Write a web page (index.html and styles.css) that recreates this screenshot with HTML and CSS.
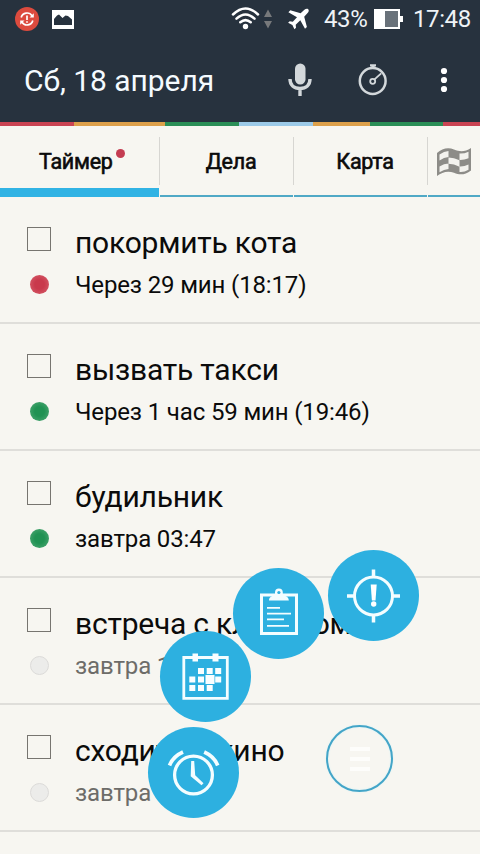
FILE: index.html
```html
<!DOCTYPE html>
<html lang="ru">
<head>
<meta charset="utf-8">
<title>Таймер</title>
<link rel="stylesheet" href="styles.css">
</head>
<body>
<div class="app">
  <header class="header">
    <div class="status">
      <svg class="status-left" width="80" height="38" viewBox="0 0 80 38">
        <circle cx="27" cy="19" r="12" fill="#dc4b3e"/>
        <g fill="none" stroke="#fff" stroke-width="1.7"><path d="M21.2 17.5a6 6 0 0 1 10.8-1.8M32.8 20.500a6 6 0 0 1-10.800 1.800M27 15.500v4.500M27 21.300v1.500"/></g>
        <path d="M33.800 13.200v4.300h-4.300zM20.200 24.800v-4.300h4.300z" fill="#fff"/>
        <path d="M52 10h22v19H52z" fill="#fff"/>
        <path d="M54 25v-6l3-3.500 2-1 3.500 3.500 3-2.500 2.500.5 4 3.500V25z" fill="#27323e"/>
      </svg>
      <div class="status-right">
        <svg class="status-net" width="84" height="38" viewBox="230 0 84 38">
          <g fill="none" stroke="#fff" stroke-width="2.500" stroke-linecap="round"><path d="M233 14.500q12.500-12 25 0M236.500 18.700q9-8.500 18 0M240.300 22.300q5.200-4.400 10.400 0"/></g>
          <circle cx="245.500" cy="26.500" r="2.700" fill="#fff"/>
          <path d="M264 17l4-7.500 4 7.500zM264 21h8l-4 7.500z" fill="#77797b"/>
          <path fill="#fff" d="M308.200 9.200c1 .9.500 2.500-.4 3.600l-3.600 3.900 2.700 10.300-1.900 1.800-4.700-8.500-4.600 4.400.3 3-1.600 1.500-2-4.200-4.300-2.200 1.600-1.600 3.100.5 4.200-4.500-8.600-4.900 1.900-2 10.300 3 3.800-3.500c1.200-1 2.800-1.500 3.800-.6z"/>
        </svg>
        <span class="percent">43%</span>
        <svg class="battery" width="30" height="38" viewBox="373 0 30 38"><path d="M374 9h26v7h3v6h-3v7h-26z" fill="#fff"/><path d="M385 11h13v16h-13z" fill="#69727a"/></svg>
        <span class="clock">17:48</span>
      </div>
    </div>
    <div class="toolbar">
      <h1 class="title">Сб, 18 апреля</h1>
      <svg class="tools" width="200" height="84" viewBox="280 38 200 84">
        <rect x="295" y="63.500" width="10.500" height="21" rx="5.250" fill="#d3d8db"/>
        <path d="M290 79c0 6 3.800 9.500 10 9.500S310 85 310 79M300 88.500v7.500" fill="none" stroke="#d3d8db" stroke-width="3.400"/>
        <g fill="none" stroke="#d3d8db"><circle cx="372.700" cy="81" r="12.900" stroke-width="2.500"/><circle cx="372.700" cy="81.300" r="2.500" stroke-width="1.800"/><path d="M374.500 79.300l6.700-6" stroke-width="1.800"/></g>
        <path d="M370 64.300h6v2.200h-1.300V69h-3.400v-2.500H370z" fill="#d3d8db"/>
        <g fill="#fff"><circle cx="444" cy="71" r="3.100"/><circle cx="444" cy="80" r="3.100"/><circle cx="444" cy="89" r="3.100"/></g>
      </svg>
    </div>
  </header>
  <div class="stripes"><i class="red"></i><i class="orange"></i><i class="green"></i><i class="blue"></i><i class="orange"></i><i class="green"></i><i class="red"></i></div>
  <nav class="tabs">
    <div class="tab active"><span class="label timer">Таймер</span><b class="badge"></b></div>
    <div class="tab"><span class="label todo">Дела</span></div>
    <div class="tab"><span class="label map">Карта</span></div>
    <div class="tab flag">
      <svg width="36" height="30" viewBox="0 0 36 30">
        <path d="M1 6C6 1.500 12 0 18 2.500S29 5 35 1v22.500c-6 4.500-11 4.800-17 2.300S6 25 1 29z" fill="#8d8c88"/>
        <path d="M3.500 7.500Q8 4.300 12.500 4v6Q8 10.300 3.500 13.500zM23.500 6.500q4.500.3 9-1.800v6.500q-4.500 2-9 1.800zM12.500 10.500q5.500 0 11 2.800v6.500q-5.500-2.800-11-3zM3.500 19.500q4.500-3 9-3V22q-4.500.2-9 3.200zM23.500 19.500q4.500.3 9-2v5.200q-4.500 2.800-9 2.300z" fill="#f3f2ee"/>
      </svg>
    </div>
  </nav>
  <main class="list">
    <article class="task"><div class="marks"><i class="box"></i><i class="dot high"></i></div><div class="text"><h2>покормить кота</h2><p>Через 29 мин (18:17)</p></div></article>
    <article class="task"><div class="marks"><i class="box"></i><i class="dot ok"></i></div><div class="text"><h2>вызвать такси</h2><p>Через 1 час 59 мин (19:46)</p></div></article>
    <article class="task"><div class="marks"><i class="box"></i><i class="dot ok"></i></div><div class="text"><h2>будильник</h2><p>завтра 03:47</p></div></article>
    <article class="task later"><div class="marks"><i class="box"></i><i class="dot"></i></div><div class="text"><h2>встреча с клиентом</h2><p>завтра 12:00</p></div></article>
    <article class="task later"><div class="marks"><i class="box"></i><i class="dot"></i></div><div class="text"><h2>сходить в кино</h2><p>завтра 19:00</p></div></article>
  </main>
  <div class="fab fab-target">
    <svg width="91" height="91" viewBox="328 549.500 91 91"><g fill="none" stroke="#f4fdff"><circle cx="373.500" cy="595.500" r="19" stroke-width="3"/><path d="M373.500 569v7M373.500 615v7M347 595.500h7M393 595.500h7" stroke-width="3.500"/></g><path d="M370.700 584h6l-1.200 16h-3.600z" fill="#fff"/><circle cx="373.700" cy="603.500" r="2.700" fill="#fff"/></svg>
  </div>
  <div class="fab fab-note">
    <svg width="91" height="91" viewBox="233 568 91 91"><path d="M261.500 595h35v38.500h-35z" fill="none" stroke="#f4fdff" stroke-width="3"/><path d="M269 600.500c0-3.500 3-4.500 6-5.500v-2.500a3.900 3.900 0 0 1 7.800 0v2.500c3 1 6 2 6 5.500z" fill="#f4fdff"/><circle cx="278.900" cy="592.500" r="1.600" fill="#2db0e0"/><path d="M267 607.800h13M267 613.600h24M267 619.300h17M267 625.800h22" stroke="#f4fdff" stroke-width="1.800"/></svg>
  </div>
  <div class="fab fab-date">
    <svg width="91" height="91" viewBox="160 631 91 91"><path d="M183.800 657.500h43.500v40.800h-43.500z" fill="none" stroke="#f4fdff" stroke-width="2.800"/><path d="M192.500 653.500h5.500v8h-5.500zM212.500 653.500h6v8h-6zM198 668h6v6h-6zM206.700 668h6v6h-6zM215.200 668h6v6h-6zM189.300 676.500h6v6h-6zM198 676.500h6v6h-6zM205.500 675h9v9h-9zM215.200 676.500h6v6h-6zM189.300 685h6v6h-6zM198 685h6v6h-6zM206.700 685h6v6h-6z" fill="#f9feff"/></svg>
  </div>
  <div class="fab fab-alarm">
    <svg width="91" height="91" viewBox="148 727 91 91"><g fill="none" stroke="#f4fdff"><circle cx="193.500" cy="775" r="18.900" stroke-width="3.300"/><path d="M169.500 765.500q3.500-9 13.500-13.500M204.200 752q10 4.500 13.500 13.500" stroke-width="3.700"/></g><path d="M191.200 761h3l1 14.300 8.300 8-2 2-10.800-9z" fill="#f4fdff"/></svg>
  </div>
  <div class="menu"><i></i><i></i><i></i></div>
</div>
</body>
</html>
```
FILE: styles.css
```css
* { box-sizing: border-box; }
body { margin: 0; font-family: Roboto, "Liberation Sans", sans-serif; }
h1, h2, p { margin: 0; font-weight: 400; }
svg { display: block; flex: none; }

.app { position: relative; width: 480px; height: 854px; overflow: hidden; background: #f7f6f1; color: #0b0b0b; }
.header { height: 122px; background: #27323e; color: #f5fbff; }
.status { display: flex; justify-content: space-between; height: 38px; }
.status-right { display: flex; padding-right: 9px; font-size: 24px; line-height: 38px; color: #eff3f6; }
.percent { width: 49px; margin: 0 0 0 10px; letter-spacing: -0.4px; }
.battery { margin-right: 10px; }
.clock { width: 58px; letter-spacing: -0.4px; white-space: nowrap; }
.toolbar { display: flex; justify-content: space-between; height: 84px; padding-left: 24px; }
.title { font-size: 30px; line-height: 85px; letter-spacing: -0.05px; white-space: nowrap; }

.stripes { display: grid; grid-template-columns: 74px 91px 74px 74px 57px 73px 37px; height: 4px; }
.red { background: #ca4453; }
.orange { background: #dda04a; }
.green { background: #2b8f57; }
.blue { background: #9ccae8; }

.tabs { display: grid; grid-template-columns: 159px 133px 133px 52px; gap: 1px; height: 71px; background: linear-gradient(#d7d6d2, #d7d6d2) 159px 11px / 1px 48px no-repeat, linear-gradient(#d7d6d2, #d7d6d2) 293px 11px / 1px 48px no-repeat, linear-gradient(#d7d6d2, #d7d6d2) 427px 11px / 1px 48px no-repeat; }
.tab { display: flex; justify-content: center; align-items: flex-start; position: relative; padding-top: 23px; border-bottom: 2px solid #50a9c6; }
.tab.active { justify-content: flex-start; padding-left: 39px; border-bottom: 9px solid #31b3e4; }
.label { font-size: 21.5px; line-height: 26px; letter-spacing: -0.25px; -webkit-text-stroke: 0.6px #0b0b0b; white-space: nowrap; }
.map { margin-left: 9px; }
.todo { margin-left: 9px; }
.badge { position: absolute; left: 116px; top: 23px; width: 9px; height: 9px; border-radius: 50%; background: #c43d52; }
.tab.flag { justify-content: flex-end; padding: 21px 8px 0 0; }

.task { display: flex; height: 127px; padding-left: 27px; border-bottom: 2px solid #dfdeda; }
.marks { display: flex; flex-direction: column; gap: 23.5px; width: 48px; padding-top: 30px; }
.box { width: 24px; height: 24px; border: 1px solid #777570; }
.dot { width: 19px; height: 19px; margin-left: 3px; border: 1px solid #dcdbd9; border-radius: 50%; background: #ececea; }
.dot.high { border: 0; background: radial-gradient(#c9394c 35%, #d86470); }
.dot.ok { border: 0; background: radial-gradient(#209253 35%, #54ab79); }
.text { padding-top: 27px; white-space: nowrap; }
.text h2 { font-size: 30px; line-height: 38px; letter-spacing: -0.22px; }
.text p { margin-top: 8px; font-size: 24px; line-height: 30px; letter-spacing: -0.14px; }
.later p { color: #6d6c69; }

.fab { position: absolute; width: 91px; height: 91px; border-radius: 50%; background: #2db0e0; }
.fab-target { left: 328px; top: 549.500px; }
.fab-note { left: 233px; top: 568px; }
.fab-date { left: 160px; top: 631px; }
.fab-alarm { left: 148px; top: 727px; }
.menu { position: absolute; left: 326px; top: 725px; display: flex; flex-direction: column; align-items: center; justify-content: center; gap: 6px; width: 67px; height: 67px; border: 2px solid #43a5c8; border-radius: 50%; box-shadow: 0 0 2px #d5f3f8, inset 0 0 2px #d5f3f8; }
.menu i { width: 20px; height: 4px; background: #fdfdfb; }
```
